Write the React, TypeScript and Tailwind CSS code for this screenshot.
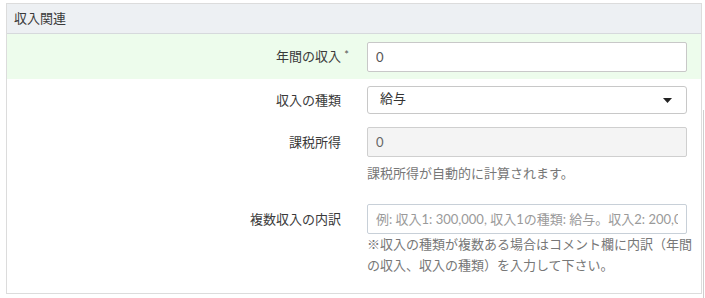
import React from "react";

const font = {
  fontFamily: 'Lato, "Noto Sans CJK JP", sans-serif',
};

const Label: React.FC<{ text: string; required?: boolean }> = ({
  text,
  required,
}) => (
  <div className="relative w-[334px] text-right text-[13px] text-[#3a3a3a] leading-none">
    {text}
    {required && (
      <span className="absolute -right-[8px] -top-[1px] text-[11px] text-[#555]">
        *
      </span>
    )}
  </div>
);

export default function App() {
  return (
    <div
      className="flex h-[298px] w-[705px] overflow-hidden bg-white"
      style={font}
    >
      <div className="ml-[6px] mt-[3px] h-[291px] w-[696px] border border-[#dcdcdc]">
        <div className="flex h-[30px] items-center border-b border-[#d6d9dc] bg-[#edf0f3] px-[7px] text-[13px] text-[#3a3a3a]">
          収入関連
        </div>

        <div className="flex h-[45px] items-center gap-[26px] bg-[#edfcec]">
          <Label text="年間の収入" required />
          <input
            readOnly
            value="0"
            className="h-[30px] w-[320px] rounded-[2px] border border-[#c8c8c8] bg-white px-[8px] text-[13px] text-[#555] outline-none"
          />
        </div>

        <div className="mt-[7px] flex items-center gap-[26px]">
          <Label text="収入の種類" />
          <div className="flex h-[28px] w-[320px] items-center justify-between rounded-[3px] border border-[#c8c8c8] bg-white pl-[12px] pr-[14px] text-[13px] text-[#333]">
            <span className="-mt-[2px]">給与</span>
            <svg width="9" height="5" viewBox="0 0 9 5">
              <path d="M0 0h9L4.5 5z" fill="#222" />
            </svg>
          </div>
        </div>

        <div className="mt-[13px] flex items-center gap-[26px]">
          <Label text="課税所得" />
          <input
            readOnly
            value="0"
            className="h-[30px] w-[320px] rounded-[2px] border border-[#cfcfcf] bg-[#f4f4f4] px-[8px] text-[13px] text-[#666] outline-none"
          />
        </div>
        <div className="ml-[360px] mt-[6px] w-[328px] text-[13px] leading-[21px] text-[#777]">
          課税所得が自動的に計算されます。
        </div>

        <div className="mt-[20px] flex items-center gap-[26px]">
          <Label text="複数収入の内訳" />
          <input
            readOnly
            placeholder="例: 収入1: 300,000, 収入1の種類: 給与。収入2: 200,000, 収入2の種類: 年金"
            className="h-[30px] w-[320px] rounded-[2px] border border-[#c8d0d8] bg-white px-[8px] text-[13px] text-[#555] outline-none placeholder:text-[#9a9a9a]"
          />
        </div>
        <div className="ml-[360px] w-[328px] text-[13px] leading-[21px] text-[#777]">
          ※収入の種類が複数ある場合はコメント欄に内訳（年間の収入、収入の種類）を入力して下さい。
        </div>
      </div>
      <div className="ml-[1px] mt-[110px] h-[188px] w-[1px] bg-[#cfcfcf]" />
    </div>
  );
}
